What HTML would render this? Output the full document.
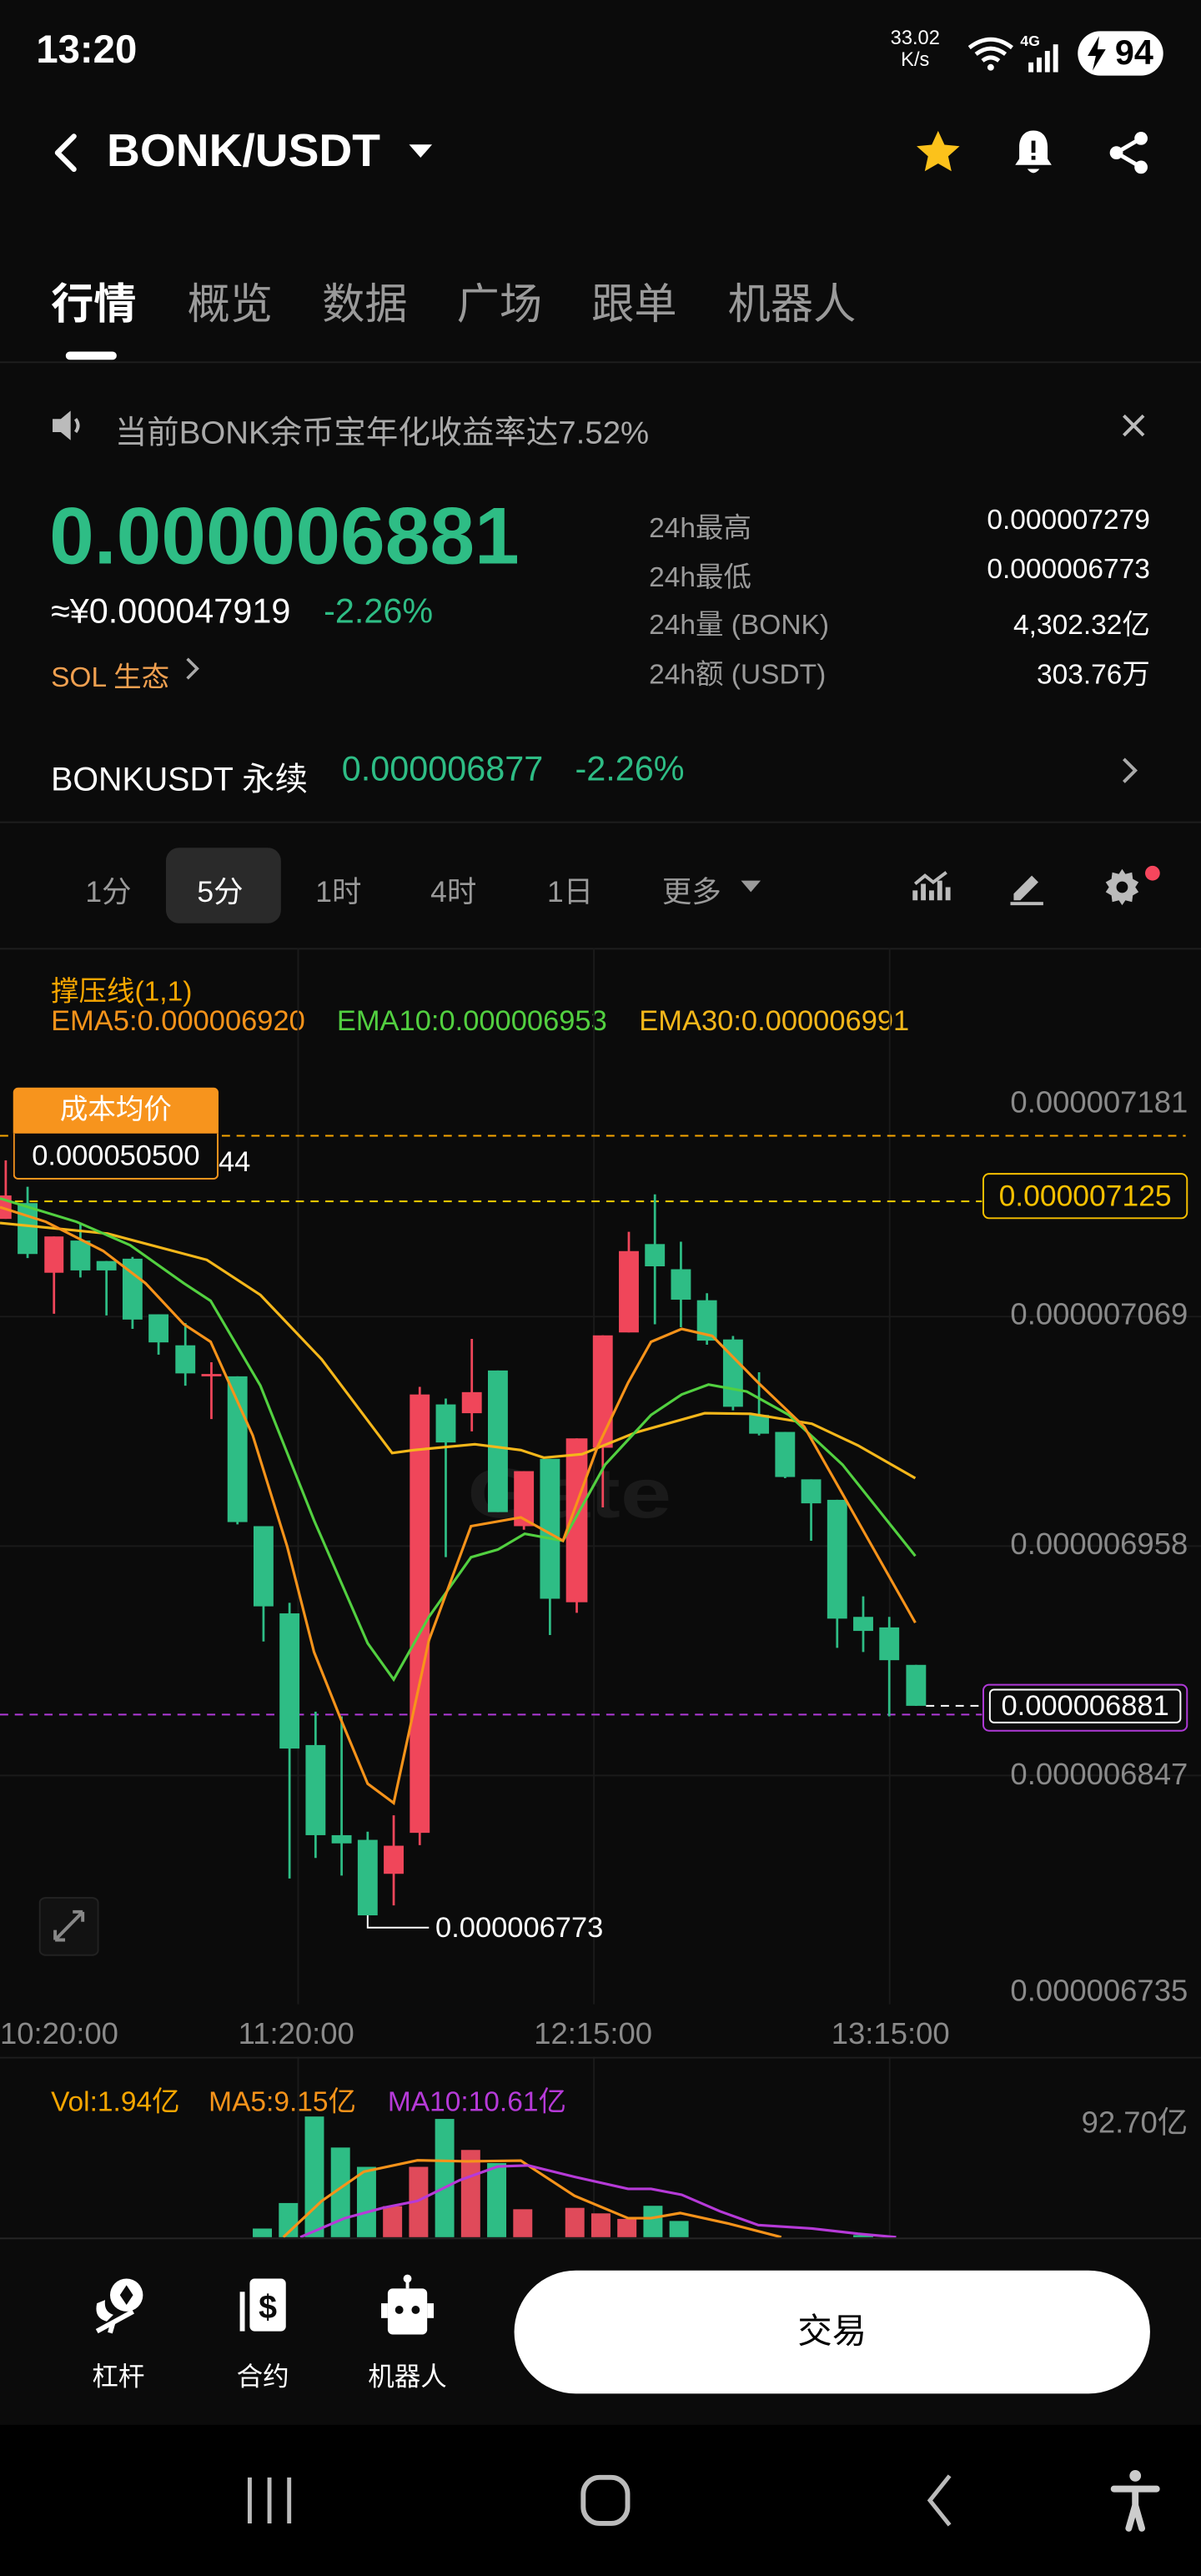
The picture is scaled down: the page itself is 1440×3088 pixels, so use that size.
<!DOCTYPE html>
<html><head><meta charset="utf-8">
<style>
html,body{margin:0;padding:0;background:#0b0b0b;width:1440px;height:3088px;overflow:hidden;}
#w{position:absolute;left:0;top:0;width:731px;height:1568px;transform:scale(1.96990,1.96939);transform-origin:0 0;background:#0b0b0b;font-family:"Liberation Sans","Noto Sans CJK SC",sans-serif;color:#fff;}
.a{position:absolute;white-space:nowrap;}
.g{color:#2ebd85}.gr{color:#8a8a8a}
.hl{position:absolute;left:0;width:731px;height:1px;background:#1e1e1e;}
.lbl{font-size:17px;color:#9a9a9a;}
.val{font-size:17px;color:#fff;text-align:right;right:31px;}
.tf{font-size:18px;color:#9a9a9a;top:529px;}
.ax{font-size:18.5px;color:#8a8a8a;}
</style></head><body><div id="w">
<div class="a" style="left:22px;top:17px;font-size:24px;font-weight:bold;">13:20</div>
<div class="a" style="left:542px;top:17px;font-size:12px;line-height:13px;text-align:center;">33.02<br>K/s</div>
<svg class="a" style="left:588px;top:20px" width="32" height="26" viewBox="0 0 32 26"><path d="M2 9 Q15 -1 28 9 M6 13 Q15 6 24 13 M10 17 Q15 13 20 17" stroke="#fff" stroke-width="2.5" fill="none"/><circle cx="15" cy="21" r="2" fill="#fff"/></svg>
<div class="a" style="left:621px;top:20px;font-size:9px;font-weight:bold;">4G</div>
<svg class="a" style="left:624px;top:26px" width="24" height="18"><rect x="2" y="12" width="3" height="6" fill="#fff"/><rect x="7" y="9" width="3" height="9" fill="#fff"/><rect x="12" y="5" width="3" height="13" fill="#fff"/><rect x="17" y="1" width="3" height="17" fill="#fff"/></svg>
<div class="a" style="left:656px;top:19px;width:52px;height:27px;border-radius:14px;background:#fff;color:#000;font-size:21px;font-weight:bold;line-height:27px;text-align:right;padding-right:6px;box-sizing:border-box;">94</div>
<svg class="a" style="left:660px;top:22px" width="14" height="21"><path d="M9 0 L2 12 H7 L5 21 L13 8 H8 Z" fill="#000"/></svg>
<svg class="a" style="left:30px;top:80px" width="20" height="26"><path d="M15 3 L5 13 L15 23" stroke="#fff" stroke-width="3.2" fill="none" stroke-linecap="round" stroke-linejoin="round"/></svg>
<div class="a" style="left:65px;top:76px;font-size:28px;font-weight:bold;">BONK/USDT</div>
<svg class="a" style="left:248px;top:86px" width="16" height="12"><path d="M1 2 H15 L8 10 Z" fill="#fff"/></svg>
<svg class="a" style="left:555px;top:77px" width="32" height="32" viewBox="0 0 24 24"><path d="M12 2 L14.9 8.3 L21.8 9 L16.6 13.6 L18.1 20.4 L12 16.9 L5.9 20.4 L7.4 13.6 L2.2 9 L9.1 8.3 Z" fill="#fcc21b"/></svg>
<svg class="a" style="left:614px;top:77px" width="30" height="32" viewBox="0 0 24 26"><path d="M12 2 C7 2 5 6 5 10 V16 L3 19 H21 L19 16 V10 C19 6 17 2 12 2 Z" fill="#fff"/><path d="M9 21 Q12 25 15 21" fill="#fff"/><rect x="11" y="7" width="2" height="6" fill="#0b0b0b"/><rect x="11" y="14.5" width="2" height="2" fill="#0b0b0b"/></svg>
<svg class="a" style="left:672px;top:78px" width="30" height="30" viewBox="0 0 24 24"><circle cx="18" cy="5" r="3.2" fill="#fff"/><circle cx="6" cy="12" r="3.2" fill="#fff"/><circle cx="18" cy="19" r="3.2" fill="#fff"/><path d="M18 5 L6 12 L18 19" stroke="#fff" stroke-width="2" fill="none"/></svg>
<div class="a" style="left:31px;top:165px;font-size:26px;font-weight:bold;">行情</div>
<div class="a" style="left:114px;top:165px;font-size:26px;color:#9a9a9a;">概览</div>
<div class="a" style="left:196px;top:165px;font-size:26px;color:#9a9a9a;">数据</div>
<div class="a" style="left:278px;top:165px;font-size:26px;color:#9a9a9a;">广场</div>
<div class="a" style="left:360px;top:165px;font-size:26px;color:#9a9a9a;">跟单</div>
<div class="a" style="left:443px;top:165px;font-size:26px;color:#9a9a9a;">机器人</div>
<div class="a" style="left:40px;top:214px;width:31px;height:5px;border-radius:3px;background:#fff;"></div>
<div class="hl" style="top:220px"></div>
<svg class="a" style="left:30px;top:248px" width="24" height="22" viewBox="0 0 24 22"><path d="M2 7 H7 L13 2 V20 L7 15 H2 Z" fill="#bbb"/><path d="M16 7 Q19 11 16 15" stroke="#bbb" stroke-width="2" fill="none"/></svg>
<div class="a" style="left:70px;top:247px;font-size:19.5px;color:#aaa;">当前BONK余币宝年化收益率达7.52%</div>
<svg class="a" style="left:682px;top:251px" width="16" height="16"><path d="M2 2 L14 14 M14 2 L2 14" stroke="#bbb" stroke-width="2"/></svg>
<div class="a g" style="left:30px;top:299px;font-size:49px;font-weight:bold;">0.000006881</div>
<div class="a" style="left:31px;top:361px;font-size:21px;">≈¥0.000047919</div>
<div class="a g" style="left:197px;top:361px;font-size:21px;">-2.26%</div>
<div class="a" style="left:31px;top:398px;font-size:17px;color:#f0a050;">SOL 生态</div>
<svg class="a" style="left:112px;top:400px" width="10" height="14"><path d="M2 1 L8 7 L2 13" stroke="#aaa" stroke-width="1.8" fill="none"/></svg>
<div class="a lbl" style="left:395px;top:307px;">24h最高</div><div class="a val" style="top:307px;">0.000007279</div>
<div class="a lbl" style="left:395px;top:337px;">24h最低</div><div class="a val" style="top:337px;">0.000006773</div>
<div class="a lbl" style="left:395px;top:366px;">24h量 (BONK)</div><div class="a val" style="top:366px;">4,302.32亿</div>
<div class="a lbl" style="left:395px;top:396px;">24h额 (USDT)</div><div class="a val" style="top:396px;">303.76万</div>
<div class="a" style="left:31px;top:458px;font-size:20px;">BONKUSDT 永续</div>
<div class="a g" style="left:208px;top:457px;font-size:21px;">0.000006877</div>
<div class="a g" style="left:350px;top:457px;font-size:21px;">-2.26%</div>
<svg class="a" style="left:682px;top:460px" width="12" height="18"><path d="M2 2 L9 9 L2 16" stroke="#aaa" stroke-width="2" fill="none"/></svg>
<div class="hl" style="top:500px"></div>
<div class="a" style="left:101px;top:516px;width:70px;height:46px;border-radius:8px;background:#2a2a2a;"></div>
<div class="a tf" style="left:52px;">1分</div>
<div class="a tf" style="left:120px;color:#fff;">5分</div>
<div class="a tf" style="left:192px;">1时</div>
<div class="a tf" style="left:262px;">4时</div>
<div class="a tf" style="left:333px;">1日</div>
<div class="a tf" style="left:403px;">更多</div>
<svg class="a" style="left:451px;top:535px" width="12" height="9"><path d="M0 1 H12 L6 8 Z" fill="#9a9a9a"/></svg>
<svg class="a" style="left:555px;top:528px" width="24" height="24" viewBox="0 0 24 24"><path d="M2 20 V14 M7 20 V10 M12 20 V14 M17 20 V8 M22 20 V12" stroke="#bbb" stroke-width="3"/><path d="M2 10 L8 5 L13 9 L21 3" stroke="#bbb" stroke-width="2" fill="none"/></svg>
<svg class="a" style="left:613px;top:528px" width="24" height="24" viewBox="0 0 24 24"><path d="M4 16 L15 5 L19 9 L8 20 H4 Z" fill="#bbb"/><rect x="2" y="21" width="20" height="2" fill="#bbb"/></svg>
<svg class="a" style="left:671px;top:528px" width="24" height="24" viewBox="0 0 24 24"><path d="M12 1 L14 4 L18 3 L18.5 7 L22 9 L20 12 L22 15 L18.5 17 L18 21 L14 20 L12 23 L10 20 L6 21 L5.5 17 L2 15 L4 12 L2 9 L5.5 7 L6 3 L10 4 Z" fill="#bbb"/><circle cx="12" cy="12" r="3.5" fill="#0b0b0b"/></svg>
<div class="a" style="left:697px;top:527px;width:9px;height:9px;border-radius:50%;background:#f6465d;"></div>
<div class="hl" style="top:577px"></div>
<div class="a" style="left:31px;top:589px;font-size:17px;color:#f7a600;">撑压线(1,1)</div>
<div class="a" style="left:31px;top:611px;font-size:17.5px;color:#f7931a;">EMA5:0.000006920</div>
<div class="a" style="left:205px;top:611px;font-size:17.5px;color:#52d040;">EMA10:0.000006953</div>
<div class="a" style="left:389px;top:611px;font-size:17.5px;color:#f5b71a;">EMA30:0.000006991</div>
<div class="a" style="left:181px;top:577px;width:1px;height:643px;background:#1a1a1a;"></div>
<div class="a" style="left:361px;top:577px;width:1px;height:643px;background:#1a1a1a;"></div>
<div class="a" style="left:541px;top:577px;width:1px;height:643px;background:#1a1a1a;"></div>
<div class="a" style="left:181px;top:1252px;width:1px;height:110px;background:#1a1a1a;"></div>
<div class="a" style="left:361px;top:1252px;width:1px;height:110px;background:#1a1a1a;"></div>
<div class="a" style="left:541px;top:1252px;width:1px;height:110px;background:#1a1a1a;"></div>
<svg class="a" style="left:0;top:660px" width="731" height="558.6" viewBox="0 0 1568 1568" preserveAspectRatio="none">
<g stroke="#1a1a1a"><line x1="0" y1="397" x2="1568" y2="397" vector-effect="non-scaling-stroke"/><line x1="0" y1="789" x2="1568" y2="789" vector-effect="non-scaling-stroke"/><line x1="0" y1="1181" x2="1568" y2="1181" vector-effect="non-scaling-stroke"/></g>
<text x="610" y="740" font-family="Liberation Sans" font-weight="bold" font-size="120" fill="#1a1a1a">Gate</text>
<line x1="0" y1="88" x2="1548" y2="88" stroke="#f7a600" stroke-dasharray="5 4" vector-effect="non-scaling-stroke"/>
<line x1="0" y1="200" x2="1282" y2="200" stroke="#f7d000" stroke-dasharray="5 4" vector-effect="non-scaling-stroke"/>
<line x1="0" y1="1077" x2="1282" y2="1077" stroke="#b03ad8" stroke-dasharray="5 4" vector-effect="non-scaling-stroke"/>
<line x1="1209" y1="1062" x2="1282" y2="1062" stroke="#fff" stroke-dasharray="5 4" vector-effect="non-scaling-stroke"/>
<g id="cd"></g>
<polyline fill="none" stroke="#f5b71a" stroke-width="1.6" vector-effect="non-scaling-stroke" points="0,237 140,255 270,300 340,360 420,470 512,630 540,625 620,615 680,625 710,638 760,632 830,595 920,562 980,563 1060,580 1120,617 1195,673"/>
<polyline fill="none" stroke="#52d040" stroke-width="1.6" vector-effect="non-scaling-stroke" points="0,195 100,235 170,275 240,340 275,370 340,515 410,745 480,955 514,1017 560,910 615,808 650,795 685,768 735,780 790,650 850,565 890,530 925,513 975,525 1030,565 1100,650 1195,806"/>
<polyline fill="none" stroke="#f7931a" stroke-width="1.6" vector-effect="non-scaling-stroke" points="0,210 60,235 135,285 190,340 240,410 275,440 330,600 375,790 410,970 445,1085 480,1195 514,1228 560,950 615,755 680,740 735,780 780,620 820,510 850,440 890,418 930,430 990,510 1050,585 1100,700 1195,920"/>
<polyline fill="none" stroke="#fff" vector-effect="non-scaling-stroke" points="480,1420 480,1441 560,1441"/>
<rect x="52" y="1390" width="76" height="98" rx="8" fill="#121212" stroke="#222" vector-effect="non-scaling-stroke"/>
<path d="M72 1462 L108 1414 M72 1462 V1445 M72 1462 H85 M108 1414 V1431 M108 1414 H95" stroke="#888" stroke-width="2" fill="none" vector-effect="non-scaling-stroke"/>
</svg>
<div class="a" style="left:8px;top:662px;width:125px;height:28px;background:#f7941d;border-radius:3px 3px 0 0;font-size:17px;text-align:center;line-height:28px;">成本均价</div>
<div class="a" style="left:8px;top:690px;width:123px;height:27px;border:1px solid #f7941d;border-top:none;background:#0b0b0b;font-size:17.5px;text-align:center;line-height:27px;border-radius:0 0 3px 3px;">0.000050500</div>
<div class="a" style="left:133px;top:697px;font-size:17.5px;">44</div>
<div class="a ax" style="right:8px;top:660px;">0.000007181</div>
<div class="a ax" style="right:8px;top:789px;">0.000007069</div>
<div class="a ax" style="right:8px;top:929px;">0.000006958</div>
<div class="a ax" style="right:8px;top:1069px;">0.000006847</div>
<div class="a ax" style="right:8px;top:1201px;">0.000006735</div>
<div class="a" style="left:598px;top:714px;width:123px;height:26px;border:1px solid #f7c000;border-radius:4px;color:#f7c000;font-size:18px;line-height:26px;text-align:center;background:#0b0b0b;">0.000007125</div>
<div class="a" style="left:598px;top:1025px;width:123px;height:27px;border:1px solid #b03ad8;border-radius:4px;background:#0b0b0b;"></div>
<div class="a" style="left:602px;top:1028px;width:115px;height:19px;border:1px solid #fff;border-radius:3px;font-size:17.5px;line-height:19px;text-align:center;">0.000006881</div>
<div class="a" style="left:265px;top:1163px;font-size:17.5px;">0.000006773</div>
<div class="a ax" style="left:0;top:1227px;">10:20:00</div>
<div class="a ax" style="left:145px;top:1227px;">11:20:00</div>
<div class="a ax" style="left:325px;top:1227px;">12:15:00</div>
<div class="a ax" style="left:506px;top:1227px;">13:15:00</div>
<div class="hl" style="top:1252px"></div>
<div class="a" style="left:31px;top:1265px;font-size:17px;color:#f7a600;">Vol:1.94亿</div>
<div class="a" style="left:127px;top:1265px;font-size:17px;color:#f7931a;">MA5:9.15亿</div>
<div class="a" style="left:236px;top:1265px;font-size:17px;color:#b63ad8;">MA10:10.61亿</div>
<div class="a ax" style="right:8px;top:1278px;">92.70亿</div>
<svg class="a" style="left:0;top:1238.6px" width="731" height="123.8" viewBox="0 0 1568 590" preserveAspectRatio="none">
<g fill="#2ebd85"><rect x="330" y="560" width="25" height="25"/><rect x="364" y="486" width="25" height="99"/><rect x="398" y="235" width="25" height="350"/><rect x="432" y="325" width="25" height="260"/><rect x="466" y="381" width="25" height="204"/><rect x="568" y="242" width="25" height="343"/><rect x="636" y="370" width="25" height="215"/><rect x="840" y="494" width="25" height="91"/><rect x="874" y="538" width="25" height="47"/><rect x="1114" y="579" width="26" height="6"/></g>
<g fill="#e04a5a"><rect x="500" y="495" width="25" height="90"/><rect x="534" y="381" width="25" height="204"/><rect x="602" y="332" width="25" height="253"/><rect x="670" y="504" width="25" height="81"/><rect x="738" y="500" width="25" height="85"/><rect x="772" y="516" width="25" height="69"/><rect x="806" y="532" width="25" height="53"/></g>
<polyline fill="none" stroke="#f7931a" stroke-width="1.6" vector-effect="non-scaling-stroke" points="370,585 420,480 475,395 545,362 610,365 680,363 750,465 820,530 850,530 888,515 950,545 1020,585"/>
<polyline fill="none" stroke="#b63ad8" stroke-width="1.6" vector-effect="non-scaling-stroke" points="392,585 450,530 500,500 545,480 600,420 650,380 690,377 750,410 820,445 850,445 890,462 940,510 990,550 1060,560 1120,575 1170,585"/>
</svg>
<div class="hl" style="top:1362px;background:#252525"></div>
<svg class="a" style="left:55px;top:1385px" width="34" height="36" viewBox="0 0 34 36"><circle cx="22" cy="12" r="10" fill="#fff"/><path d="M22 6 L26 12 L22 18 L18 12 Z" fill="#0b0b0b"/><path d="M4 17 Q2 26 10 28 L14 24 Q8 22 9 15 Z" fill="#fff"/><path d="M4 34 L26 22 M14 28 L12 35" stroke="#fff" stroke-width="3"/></svg>
<div class="a" style="left:56px;top:1433px;font-size:16px;">杠杆</div>
<svg class="a" style="left:144px;top:1387px" width="32" height="34" viewBox="0 0 32 34"><rect x="2" y="8" width="3" height="24" fill="#fff"/><rect x="8" y="0" width="22" height="32" rx="3" fill="#fff"/><text x="19" y="24" font-family="Liberation Sans" font-weight="bold" font-size="20" fill="#0b0b0b" text-anchor="middle">$</text></svg>
<div class="a" style="left:144px;top:1433px;font-size:16px;">合约</div>
<svg class="a" style="left:231px;top:1384px" width="34" height="38" viewBox="0 0 34 38"><circle cx="17" cy="3" r="2.5" fill="#fff"/><rect x="16" y="3" width="2" height="6" fill="#fff"/><rect x="5" y="9" width="24" height="28" rx="3" fill="#fff"/><rect x="1" y="18" width="4" height="9" fill="#fff"/><rect x="29" y="18" width="4" height="9" fill="#fff"/><circle cx="12" cy="22" r="2.5" fill="#0b0b0b"/><circle cx="22" cy="22" r="2.5" fill="#0b0b0b"/></svg>
<div class="a" style="left:224px;top:1433px;font-size:16px;">机器人</div>
<div class="a" style="left:313px;top:1382px;width:387px;height:75px;border-radius:38px;background:#fff;color:#000;font-size:21px;text-align:center;line-height:75px;">交易</div>
<div class="a" style="left:0;top:1476px;width:731px;height:92px;background:#000;"></div>
<svg class="a" style="left:148px;top:1506px" width="34" height="32"><path d="M4 2 V30 M16 2 V30 M28 2 V30" stroke="#bbb" stroke-width="2.5"/></svg>
<svg class="a" style="left:352px;top:1505px" width="34" height="34"><rect x="3" y="3" width="27" height="28" rx="10" stroke="#bbb" stroke-width="3" fill="none"/></svg>
<svg class="a" style="left:560px;top:1505px" width="24" height="34"><path d="M18 2 L6 17 L18 32" stroke="#bbb" stroke-width="2.5" fill="none"/></svg>
<svg class="a" style="left:676px;top:1503px" width="30" height="38" viewBox="0 0 30 38"><circle cx="15" cy="4" r="3.5" fill="#ccc"/><path d="M2 12 H28 M15 12 V22 M15 22 L11 36 M15 22 L19 36" stroke="#ccc" stroke-width="4" stroke-linecap="round"/></svg>
</div>
<script>
(function(){
var G="#2ebd85",R="#f0465a";
var c=[
[0,15,190,230,130,230,R],[23,49,203,290,175,297,G],[58,83,260,322,260,392,R],[92,118,267,318,238,330,G],[126,152,302,318,302,395,G],[160,186,298,402,295,418,G],[194,220,393,441,393,462,G],[229,255,446,494,408,515,G],[263,289,495,499,475,572,R],[297,323,499,748,499,752,G],[331,357,755,892,755,952,G],[365,391,904,1135,886,1357,G],[399,425,1129,1283,1072,1322,G],[433,459,1283,1297,1080,1352,G],[467,493,1291,1420,1277,1420,G],[501,527,1301,1349,1249,1403,R],[535,561,530,1279,517,1300,R],[569,595,547,612,537,808,G],[603,629,526,562,435,593,R],[637,663,489,731,489,731,G],[671,697,661,755,661,761,R],[705,731,640,879,640,941,G],[739,767,605,885,605,903,R],[774,800,429,621,429,723,R],[808,834,285,424,252,424,R],[842,868,273,311,188,410,G],[876,902,316,368,269,415,G],[910,936,369,438,357,445,G],[944,970,436,551,430,557,G],[978,1004,565,597,492,600,G],[1012,1038,594,671,594,673,G],[1046,1072,675,716,675,780,G],[1080,1106,710,913,710,963,G],[1114,1140,910,934,875,970,G],[1148,1174,928,984,910,1080,G],[1183,1209,992,1062,992,1062,G]];
var s="";c.forEach(function(k){var m=(k[0]+k[1])/2;s+='<line x1="'+m+'" x2="'+m+'" y1="'+k[4]+'" y2="'+k[5]+'" stroke="'+k[6]+'" stroke-width="3"/><rect x="'+k[0]+'" y="'+k[2]+'" width="'+(k[1]-k[0])+'" height="'+Math.max(3,k[3]-k[2])+'" fill="'+k[6]+'"/>';});
document.getElementById("cd").innerHTML=s;})();
</script>
</body></html>
